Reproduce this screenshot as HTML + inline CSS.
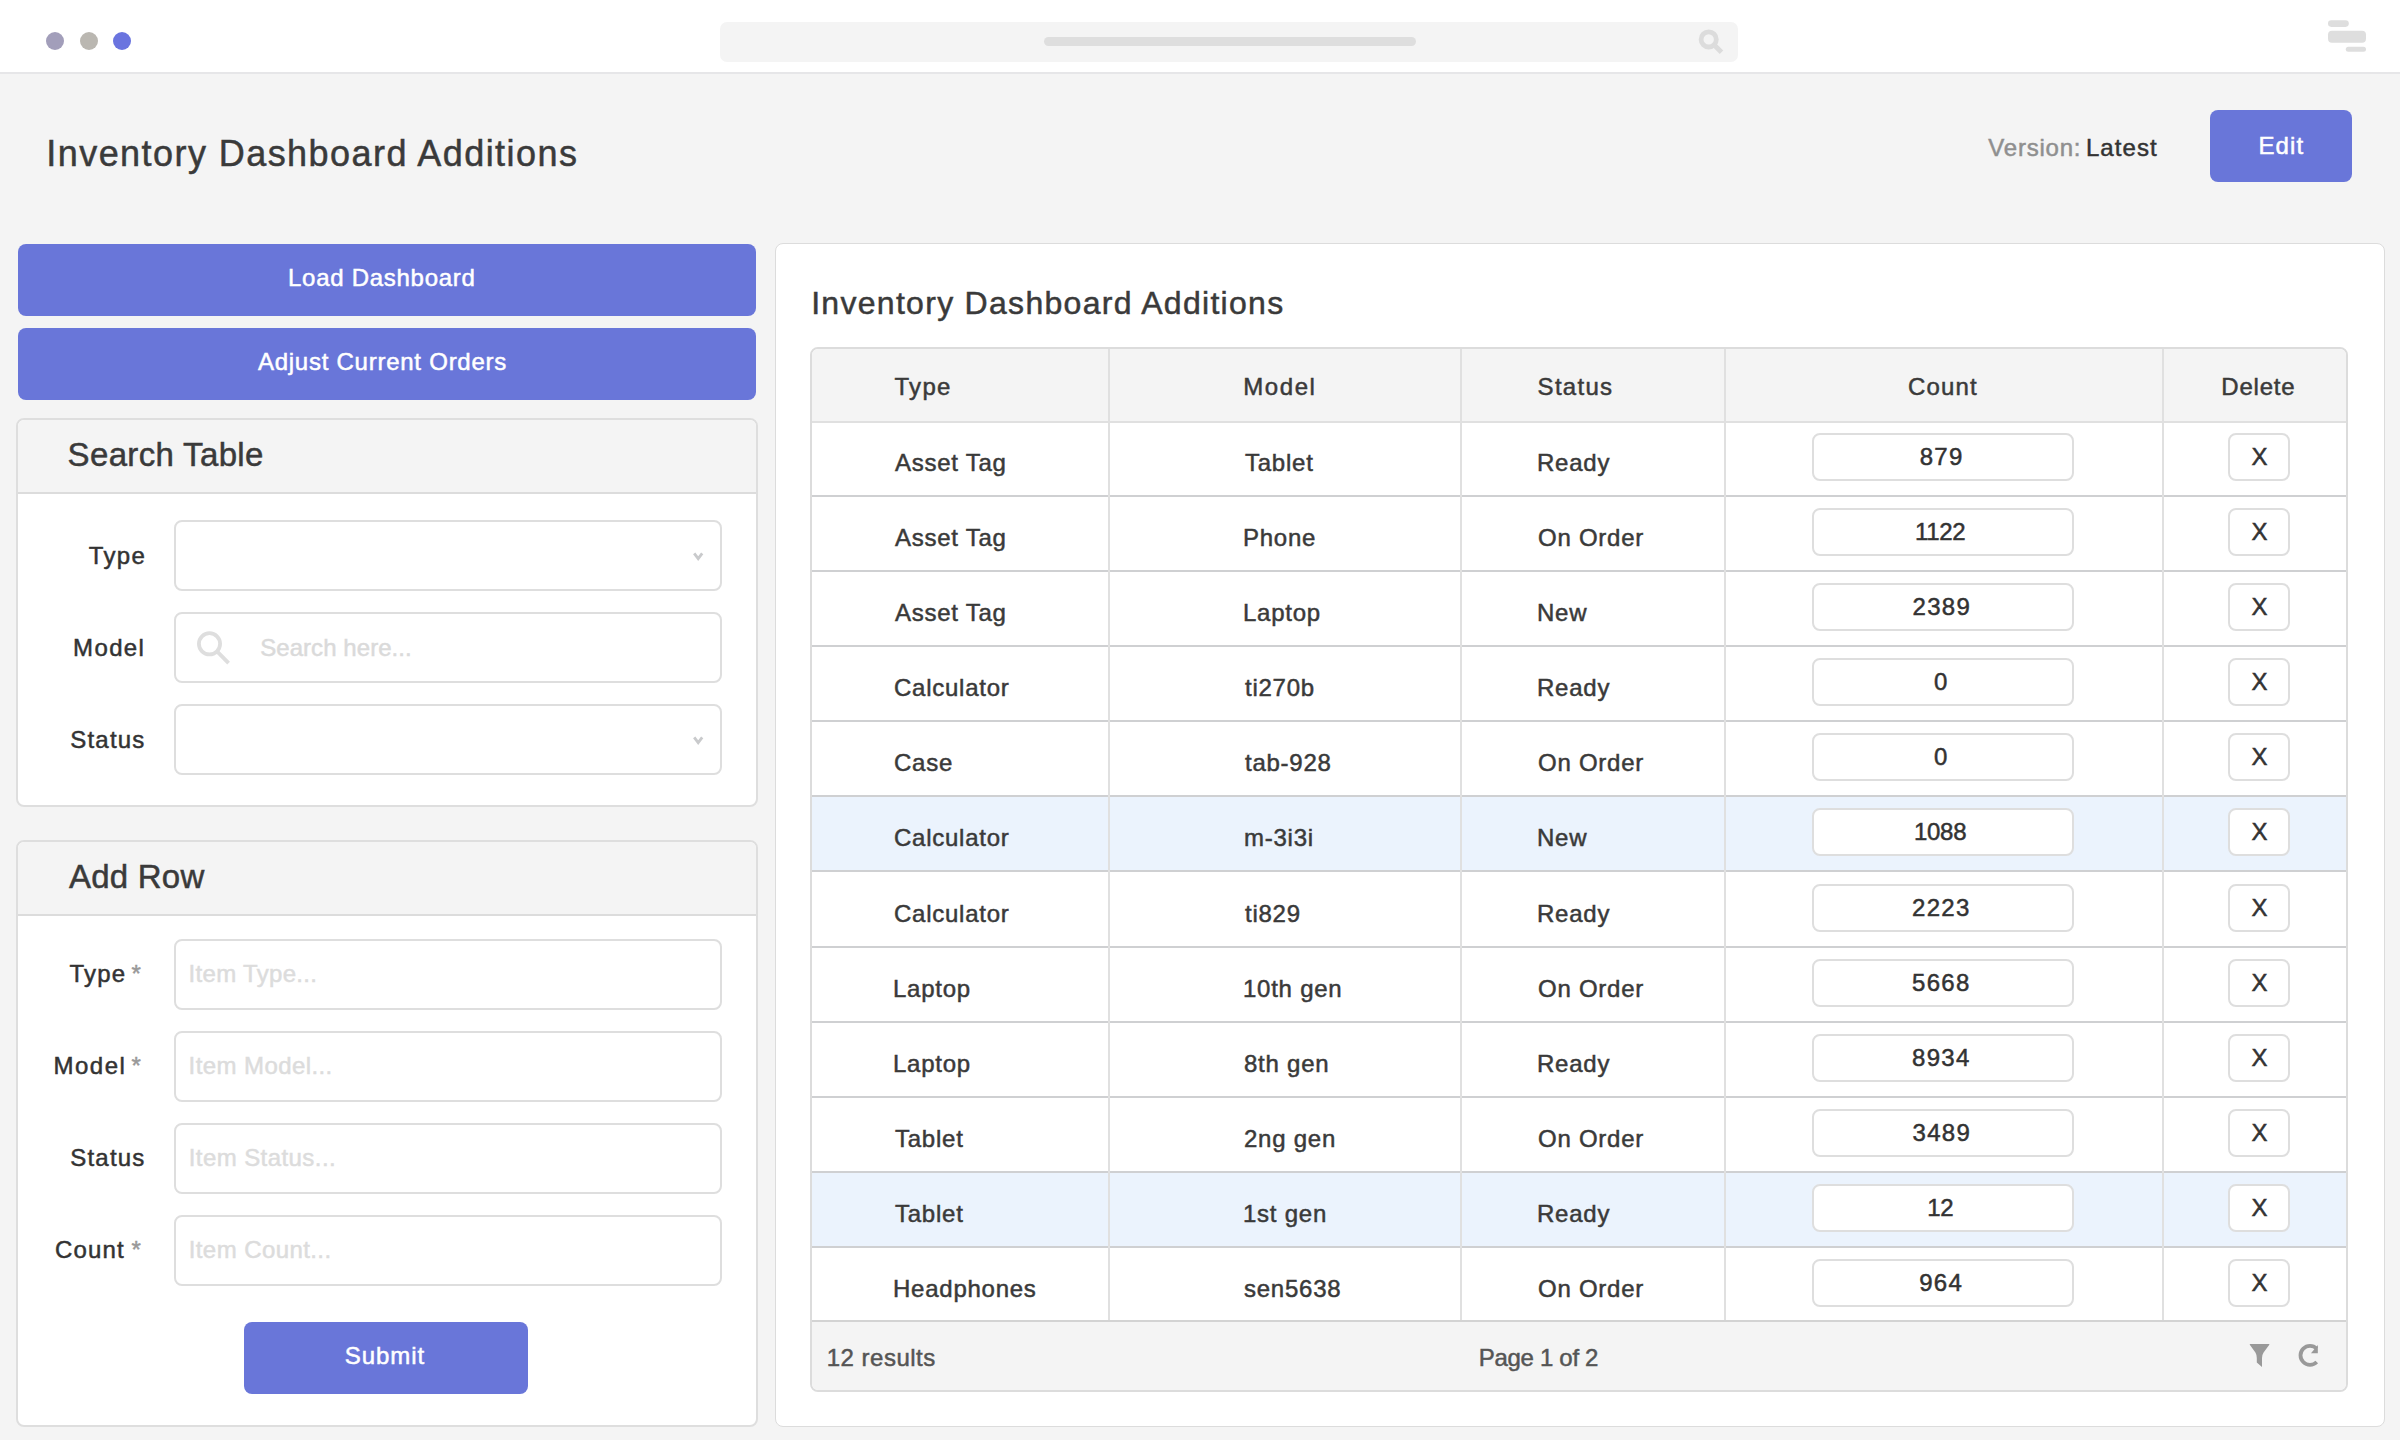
<!DOCTYPE html>
<html><head><meta charset="utf-8">
<style>
*{box-sizing:border-box;margin:0;padding:0}
html,body{width:2400px;height:1440px;overflow:hidden}
body{background:#f4f4f4;position:relative;font-family:"Liberation Sans",sans-serif}
.a{position:absolute}
.t{position:absolute;white-space:pre;line-height:1;font-family:"Liberation Sans",sans-serif;-webkit-text-stroke:0.5px currentColor}
.btn{position:absolute;background:#6976d9;border-radius:8px}
.inp{position:absolute;left:174px;width:548px;height:71px;border:2px solid #dedede;border-radius:8px;background:#fff}
.rowb{position:absolute;left:812px;width:1534px;height:2px;background:#cfd0d2}
.hl{position:absolute;left:812px;width:1534px;background:#ebf3fd}
.cin{position:absolute;left:1812px;width:262px;height:48px;border:2px solid #dedede;border-radius:8px;background:#fff}
.xb{position:absolute;left:2228px;width:62px;height:48px;border:2px solid #dedede;border-radius:8px;background:#fff}
.vl{position:absolute;top:349px;height:971px;width:2px;background:#e0e0e0}
</style></head><body>
<!-- top bar -->
<div class="a" style="left:0;top:0;width:2400px;height:72px;background:#fff"></div>
<div class="a" style="left:0;top:72px;width:2400px;height:2px;background:#e6e6e8"></div>
<div class="a" style="left:46px;top:32px;width:18px;height:18px;border-radius:50%;background:#a29eba"></div>
<div class="a" style="left:79.5px;top:32px;width:18px;height:18px;border-radius:50%;background:#bab7b1"></div>
<div class="a" style="left:113px;top:32px;width:18px;height:18px;border-radius:50%;background:#6a74df"></div>
<div class="a" style="left:720px;top:22px;width:1018px;height:40px;border-radius:7px;background:#f4f4f4"></div>
<div class="a" style="left:1044px;top:37px;width:372px;height:9px;border-radius:4.5px;background:#dedede"></div>
<svg class="a" style="left:0;top:0" width="2400" height="72">
 <circle cx="1708.7" cy="39.4" r="7.6" fill="none" stroke="#dcdcdc" stroke-width="4.8"/>
 <line x1="1714" y1="44.7" x2="1721.5" y2="52.2" stroke="#dcdcdc" stroke-width="5"/>
 <rect x="2328" y="20.2" width="20.8" height="6.7" rx="3.3" fill="#dedede"/>
 <rect x="2328" y="30.8" width="38" height="12" rx="4" fill="#dedede"/>
 <rect x="2345.8" y="46.7" width="20.2" height="5" rx="2.5" fill="#dedede"/>
</svg>
<!-- header -->
<div class="btn" style="left:2210px;top:110px;width:142px;height:72px"></div>
<!-- left column -->
<div class="btn" style="left:18px;top:244px;width:738px;height:72px"></div>
<div class="btn" style="left:18px;top:328px;width:738px;height:72px"></div>
<div class="a" style="left:16px;top:418px;width:742px;height:389px;border:2px solid #dedede;border-radius:8px;background:#fff;overflow:hidden">
  <div class="a" style="left:0;top:0;width:738px;height:74px;background:#f4f4f4;border-bottom:2px solid #dcdcdc"></div>
</div>
<div class="inp" style="top:520px"></div>
<div class="inp" style="top:612px"></div>
<div class="inp" style="top:704px"></div>
<svg class="a" style="left:0;top:0" width="760" height="800">
 <polyline points="694.2,553.3 698.2,558.6 702.2,553.3" fill="none" stroke="#c9cacc" stroke-width="2.8"/>
 <polyline points="694.2,737.3 698.2,742.6 702.2,737.3" fill="none" stroke="#c9cacc" stroke-width="2.8"/>
 <circle cx="209.5" cy="643.8" r="10.6" fill="none" stroke="#dedede" stroke-width="3.8"/>
 <line x1="217.5" y1="651.8" x2="228.6" y2="663.2" stroke="#dedede" stroke-width="3.8"/>
</svg>
<div class="a" style="left:16px;top:840px;width:742px;height:587px;border:2px solid #dedede;border-radius:8px;background:#fff;overflow:hidden">
  <div class="a" style="left:0;top:0;width:738px;height:74px;background:#f4f4f4;border-bottom:2px solid #dcdcdc"></div>
</div>
<div class="inp" style="top:939px"></div>
<div class="inp" style="top:1031px"></div>
<div class="inp" style="top:1123px"></div>
<div class="inp" style="top:1215px"></div>
<div class="btn" style="left:244px;top:1322px;width:284px;height:72px"></div>
<!-- right panel -->
<div class="a" style="left:775px;top:243px;width:1610px;height:1184px;border:1px solid #dcdcdc;border-radius:8px;background:#fff"></div>
<div class="a" style="left:810px;top:347px;width:1538px;height:1045px;border:2px solid #dcdcdc;border-radius:8px;background:#fff;overflow:hidden">
  <div class="a" style="left:0;top:0;width:1534px;height:74px;background:#f4f4f4;border-bottom:2px solid #e0e0e0"></div>
  <div class="a" style="left:0;top:971px;width:1534px;height:70px;background:#f4f4f4;border-top:2px solid #d3d3d3"></div>
</div>
<div class="rowb" style="top:495px"></div>
<div class="cin" style="top:433px"></div>
<div class="xb" style="top:433px"></div>
<div class="rowb" style="top:570px"></div>
<div class="cin" style="top:508px"></div>
<div class="xb" style="top:508px"></div>
<div class="rowb" style="top:645px"></div>
<div class="cin" style="top:583px"></div>
<div class="xb" style="top:583px"></div>
<div class="rowb" style="top:720px"></div>
<div class="cin" style="top:658px"></div>
<div class="xb" style="top:658px"></div>
<div class="rowb" style="top:795px"></div>
<div class="cin" style="top:733px"></div>
<div class="xb" style="top:733px"></div>
<div class="hl" style="top:797px;height:73px"></div>
<div class="rowb" style="top:870px"></div>
<div class="cin" style="top:808px"></div>
<div class="xb" style="top:808px"></div>
<div class="rowb" style="top:946px"></div>
<div class="cin" style="top:884px"></div>
<div class="xb" style="top:884px"></div>
<div class="rowb" style="top:1021px"></div>
<div class="cin" style="top:959px"></div>
<div class="xb" style="top:959px"></div>
<div class="rowb" style="top:1096px"></div>
<div class="cin" style="top:1034px"></div>
<div class="xb" style="top:1034px"></div>
<div class="rowb" style="top:1171px"></div>
<div class="cin" style="top:1109px"></div>
<div class="xb" style="top:1109px"></div>
<div class="hl" style="top:1173px;height:73px"></div>
<div class="rowb" style="top:1246px"></div>
<div class="cin" style="top:1184px"></div>
<div class="xb" style="top:1184px"></div>
<div class="cin" style="top:1259px"></div>
<div class="xb" style="top:1259px"></div>
<div class="vl" style="left:1108px"></div>
<div class="vl" style="left:1460px"></div>
<div class="vl" style="left:1724px"></div>
<div class="vl" style="left:2162px"></div>
<svg class="a" style="left:2240px;top:1335px" width="90" height="40">
 <path d="M9.8,9 L29.3,9 L29.3,9.8 L23.6,17.6 Q22,20 22,23 L22,31.9 L16.8,27.5 L16.8,23 Q16.8,20 15.4,17.6 L9.8,9.8 Z" fill="#999"/>
 <path d="M76.72,13.58 A9.5,9.5 0 1 0 76.72,27.02" fill="none" stroke="#999" stroke-width="3.8"/>
 <path d="M77.8,10 L77.8,18.2 L71,18.2 Z" fill="#999"/>
</svg>
<div class="t" style="left:46.3px;top:136px;font-size:36px;color:#3a3a3a;letter-spacing:1.44px">Inventory Dashboard Additions</div>
<div class="t" style="left:1988.3px;top:136px;font-size:24px;color:#8f8f8f;letter-spacing:0.78px">Version:</div>
<div class="t" style="left:2085.9px;top:136px;font-size:24px;color:#333333;letter-spacing:1.07px">Latest</div>
<div class="t" style="left:2258.5px;top:134px;font-size:24px;color:#ffffff;letter-spacing:1.07px">Edit</div>
<div class="t" style="left:288.0px;top:266px;font-size:24px;color:#ffffff;letter-spacing:0.72px">Load Dashboard</div>
<div class="t" style="left:257.9px;top:350px;font-size:24px;color:#ffffff;letter-spacing:0.75px">Adjust Current Orders</div>
<div class="t" style="left:67.6px;top:438px;font-size:33px;color:#3a3a3a;letter-spacing:0.34px">Search Table</div>
<div class="t" style="left:88.8px;top:544px;font-size:24px;color:#333333;letter-spacing:1.33px">Type</div>
<div class="t" style="left:73.1px;top:636px;font-size:24px;color:#333333;letter-spacing:1.35px">Model</div>
<div class="t" style="left:70.3px;top:728px;font-size:24px;color:#333333;letter-spacing:1.20px">Status</div>
<div class="t" style="left:260.2px;top:636px;font-size:24px;color:#dadada;letter-spacing:0.06px">Search here...</div>
<div class="t" style="left:69.0px;top:860px;font-size:33px;color:#3a3a3a;letter-spacing:0.22px">Add Row</div>
<div class="t" style="left:69.4px;top:962px;font-size:24px;color:#333333;letter-spacing:1.20px">Type</div>
<div class="t" style="left:131.6px;top:962px;font-size:24px;color:#999999;letter-spacing:0.00px">*</div>
<div class="t" style="left:53.5px;top:1054px;font-size:24px;color:#333333;letter-spacing:1.50px">Model</div>
<div class="t" style="left:131.6px;top:1054px;font-size:24px;color:#999999;letter-spacing:0.00px">*</div>
<div class="t" style="left:70.3px;top:1146px;font-size:24px;color:#333333;letter-spacing:1.20px">Status</div>
<div class="t" style="left:55.0px;top:1238px;font-size:24px;color:#333333;letter-spacing:1.18px">Count</div>
<div class="t" style="left:131.6px;top:1238px;font-size:24px;color:#999999;letter-spacing:0.00px">*</div>
<div class="t" style="left:188.6px;top:962px;font-size:24px;color:#dcdcdc;letter-spacing:0.31px">Item Type...</div>
<div class="t" style="left:188.6px;top:1054px;font-size:24px;color:#dcdcdc;letter-spacing:0.41px">Item Model...</div>
<div class="t" style="left:188.7px;top:1146px;font-size:24px;color:#dcdcdc;letter-spacing:0.43px">Item Status...</div>
<div class="t" style="left:188.7px;top:1238px;font-size:24px;color:#dcdcdc;letter-spacing:0.42px">Item Count...</div>
<div class="t" style="left:344.8px;top:1344px;font-size:24px;color:#ffffff;letter-spacing:0.94px">Submit</div>
<div class="t" style="left:811.2px;top:287px;font-size:32px;color:#3a3a3a;letter-spacing:1.29px">Inventory Dashboard Additions</div>
<div class="t" style="left:894.4px;top:375px;font-size:24px;color:#3a3a3a;letter-spacing:1.33px">Type</div>
<div class="t" style="left:1243.2px;top:375px;font-size:24px;color:#3a3a3a;letter-spacing:1.60px">Model</div>
<div class="t" style="left:1537.6px;top:375px;font-size:24px;color:#3a3a3a;letter-spacing:1.28px">Status</div>
<div class="t" style="left:1908.0px;top:375px;font-size:24px;color:#3a3a3a;letter-spacing:1.15px">Count</div>
<div class="t" style="left:2221.3px;top:375px;font-size:24px;color:#3a3a3a;letter-spacing:0.80px">Delete</div>
<div class="t" style="left:826.8px;top:1346px;font-size:24px;color:#555555;letter-spacing:0.48px">12 results</div>
<div class="t" style="left:1478.8px;top:1346px;font-size:24px;color:#555555;letter-spacing:-0.31px">Page 1 of 2</div>
<div class="t" style="left:895.0px;top:451px;font-size:24px;color:#3a3a3a;letter-spacing:0.75px">Asset Tag</div>
<div class="t" style="left:1245.0px;top:451px;font-size:24px;color:#3a3a3a;letter-spacing:0.75px">Tablet</div>
<div class="t" style="left:1537.0px;top:451px;font-size:24px;color:#3a3a3a;letter-spacing:0.75px">Ready</div>
<div class="t" style="left:1919.7px;top:445px;font-size:24px;color:#333333;letter-spacing:1.30px">879</div>
<div class="t" style="left:2251.5px;top:445px;font-size:24px;color:#333333;letter-spacing:0.00px">X</div>
<div class="t" style="left:895.0px;top:526px;font-size:24px;color:#3a3a3a;letter-spacing:0.75px">Asset Tag</div>
<div class="t" style="left:1243.0px;top:526px;font-size:24px;color:#3a3a3a;letter-spacing:0.75px">Phone</div>
<div class="t" style="left:1538.0px;top:526px;font-size:24px;color:#3a3a3a;letter-spacing:0.75px">On Order</div>
<div class="t" style="left:1915.0px;top:520px;font-size:24px;color:#333333;letter-spacing:-0.30px">1122</div>
<div class="t" style="left:2251.5px;top:520px;font-size:24px;color:#333333;letter-spacing:0.00px">X</div>
<div class="t" style="left:895.0px;top:601px;font-size:24px;color:#3a3a3a;letter-spacing:0.75px">Asset Tag</div>
<div class="t" style="left:1243.0px;top:601px;font-size:24px;color:#3a3a3a;letter-spacing:0.75px">Laptop</div>
<div class="t" style="left:1537.0px;top:601px;font-size:24px;color:#3a3a3a;letter-spacing:0.75px">New</div>
<div class="t" style="left:1912.5px;top:595px;font-size:24px;color:#333333;letter-spacing:1.30px">2389</div>
<div class="t" style="left:2251.5px;top:595px;font-size:24px;color:#333333;letter-spacing:0.00px">X</div>
<div class="t" style="left:894.0px;top:676px;font-size:24px;color:#3a3a3a;letter-spacing:0.75px">Calculator</div>
<div class="t" style="left:1245.0px;top:676px;font-size:24px;color:#3a3a3a;letter-spacing:0.75px">ti270b</div>
<div class="t" style="left:1537.0px;top:676px;font-size:24px;color:#3a3a3a;letter-spacing:0.75px">Ready</div>
<div class="t" style="left:1934.0px;top:670px;font-size:24px;color:#333333;letter-spacing:1.30px">0</div>
<div class="t" style="left:2251.5px;top:670px;font-size:24px;color:#333333;letter-spacing:0.00px">X</div>
<div class="t" style="left:894.0px;top:751px;font-size:24px;color:#3a3a3a;letter-spacing:0.75px">Case</div>
<div class="t" style="left:1245.0px;top:751px;font-size:24px;color:#3a3a3a;letter-spacing:0.75px">tab-928</div>
<div class="t" style="left:1538.0px;top:751px;font-size:24px;color:#3a3a3a;letter-spacing:0.75px">On Order</div>
<div class="t" style="left:1934.0px;top:745px;font-size:24px;color:#333333;letter-spacing:1.30px">0</div>
<div class="t" style="left:2251.5px;top:745px;font-size:24px;color:#333333;letter-spacing:0.00px">X</div>
<div class="t" style="left:894.0px;top:826px;font-size:24px;color:#3a3a3a;letter-spacing:0.75px">Calculator</div>
<div class="t" style="left:1244.0px;top:826px;font-size:24px;color:#3a3a3a;letter-spacing:0.75px">m-3i3i</div>
<div class="t" style="left:1537.0px;top:826px;font-size:24px;color:#3a3a3a;letter-spacing:0.75px">New</div>
<div class="t" style="left:1914.0px;top:820px;font-size:24px;color:#333333;letter-spacing:-0.30px">1088</div>
<div class="t" style="left:2251.5px;top:820px;font-size:24px;color:#333333;letter-spacing:0.00px">X</div>
<div class="t" style="left:894.0px;top:902px;font-size:24px;color:#3a3a3a;letter-spacing:0.75px">Calculator</div>
<div class="t" style="left:1245.0px;top:902px;font-size:24px;color:#3a3a3a;letter-spacing:0.75px">ti829</div>
<div class="t" style="left:1537.0px;top:902px;font-size:24px;color:#3a3a3a;letter-spacing:0.75px">Ready</div>
<div class="t" style="left:1912.0px;top:896px;font-size:24px;color:#333333;letter-spacing:1.30px">2223</div>
<div class="t" style="left:2251.5px;top:896px;font-size:24px;color:#333333;letter-spacing:0.00px">X</div>
<div class="t" style="left:893.0px;top:977px;font-size:24px;color:#3a3a3a;letter-spacing:0.75px">Laptop</div>
<div class="t" style="left:1243.0px;top:977px;font-size:24px;color:#3a3a3a;letter-spacing:0.75px">10th gen</div>
<div class="t" style="left:1538.0px;top:977px;font-size:24px;color:#3a3a3a;letter-spacing:0.75px">On Order</div>
<div class="t" style="left:1912.0px;top:971px;font-size:24px;color:#333333;letter-spacing:1.30px">5668</div>
<div class="t" style="left:2251.5px;top:971px;font-size:24px;color:#333333;letter-spacing:0.00px">X</div>
<div class="t" style="left:893.0px;top:1052px;font-size:24px;color:#3a3a3a;letter-spacing:0.75px">Laptop</div>
<div class="t" style="left:1244.0px;top:1052px;font-size:24px;color:#3a3a3a;letter-spacing:0.75px">8th gen</div>
<div class="t" style="left:1537.0px;top:1052px;font-size:24px;color:#3a3a3a;letter-spacing:0.75px">Ready</div>
<div class="t" style="left:1912.0px;top:1046px;font-size:24px;color:#333333;letter-spacing:1.30px">8934</div>
<div class="t" style="left:2251.5px;top:1046px;font-size:24px;color:#333333;letter-spacing:0.00px">X</div>
<div class="t" style="left:895.0px;top:1127px;font-size:24px;color:#3a3a3a;letter-spacing:0.75px">Tablet</div>
<div class="t" style="left:1244.0px;top:1127px;font-size:24px;color:#3a3a3a;letter-spacing:0.75px">2ng gen</div>
<div class="t" style="left:1538.0px;top:1127px;font-size:24px;color:#3a3a3a;letter-spacing:0.75px">On Order</div>
<div class="t" style="left:1912.5px;top:1121px;font-size:24px;color:#333333;letter-spacing:1.30px">3489</div>
<div class="t" style="left:2251.5px;top:1121px;font-size:24px;color:#333333;letter-spacing:0.00px">X</div>
<div class="t" style="left:895.0px;top:1202px;font-size:24px;color:#3a3a3a;letter-spacing:0.75px">Tablet</div>
<div class="t" style="left:1243.0px;top:1202px;font-size:24px;color:#3a3a3a;letter-spacing:0.75px">1st gen</div>
<div class="t" style="left:1537.0px;top:1202px;font-size:24px;color:#3a3a3a;letter-spacing:0.75px">Ready</div>
<div class="t" style="left:1927.2px;top:1196px;font-size:24px;color:#333333;letter-spacing:-0.30px">12</div>
<div class="t" style="left:2251.5px;top:1196px;font-size:24px;color:#333333;letter-spacing:0.00px">X</div>
<div class="t" style="left:893.0px;top:1277px;font-size:24px;color:#3a3a3a;letter-spacing:0.75px">Headphones</div>
<div class="t" style="left:1244.0px;top:1277px;font-size:24px;color:#3a3a3a;letter-spacing:0.75px">sen5638</div>
<div class="t" style="left:1538.0px;top:1277px;font-size:24px;color:#3a3a3a;letter-spacing:0.75px">On Order</div>
<div class="t" style="left:1919.2px;top:1271px;font-size:24px;color:#333333;letter-spacing:1.30px">964</div>
<div class="t" style="left:2251.5px;top:1271px;font-size:24px;color:#333333;letter-spacing:0.00px">X</div>
</body></html>
